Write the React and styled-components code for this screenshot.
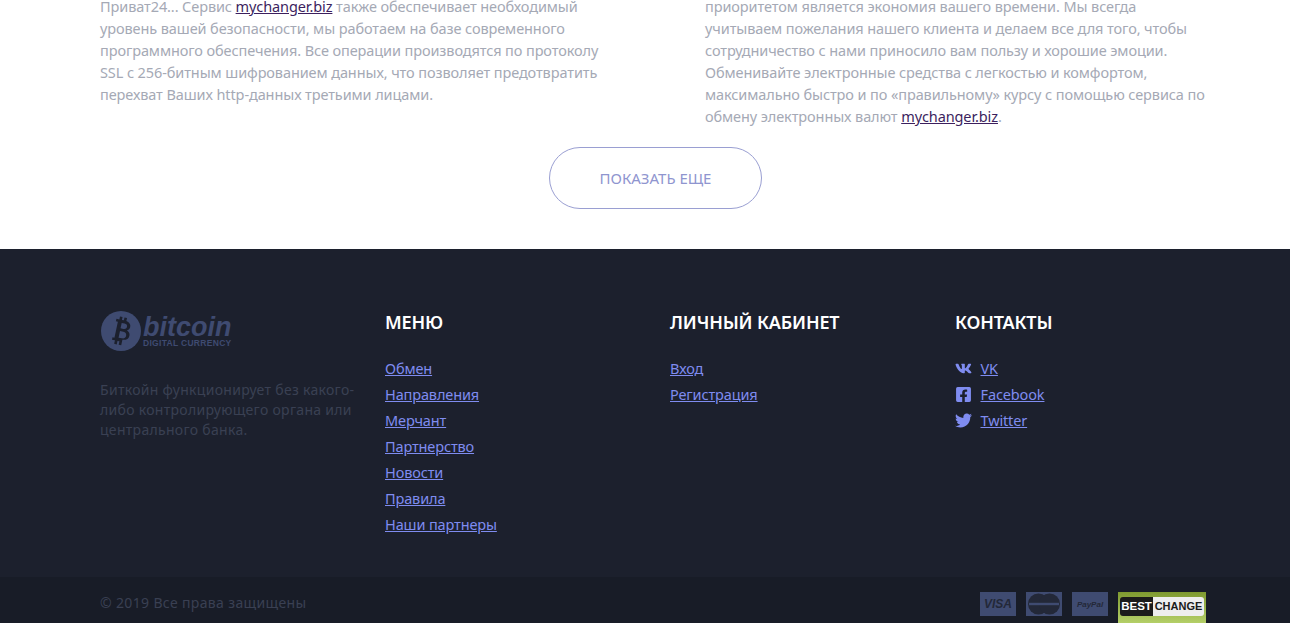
import React from 'react';
import styled, { createGlobalStyle } from 'styled-components';
import { FaVk, FaFacebookSquare, FaTwitter } from 'react-icons/fa';

const GlobalStyle = createGlobalStyle`
  html, body {
    margin: 0;
    padding: 0;
    background: #fff;
    overflow: hidden;
  }
  * { box-sizing: border-box; }
`;

const menuLinks = ['Обмен', 'Направления', 'Мерчант', 'Партнерство', 'Новости', 'Правила', 'Наши партнеры'];
const accountLinks = ['Вход', 'Регистрация'];
const socialLinks = [
  { name: 'VK', Icon: FaVk },
  { name: 'Facebook', Icon: FaFacebookSquare },
  { name: 'Twitter', Icon: FaTwitter },
];

const App = () => {
  return (
    <Page>
      <GlobalStyle />
      <Article>
        <TextColumns>
          <TextColumn>
            Приват24... Сервис <InlineLink>mychanger.biz</InlineLink> также обеспечивает необходимый<br />
            уровень вашей безопасности, мы работаем на базе современного<br />
            программного обеспечения. Все операции производятся по протоколу<br />
            SSL с 256-битным шифрованием данных, что позволяет предотвратить<br />
            перехват Ваших http-данных третьими лицами.
          </TextColumn>
          <TextColumn>
            приоритетом является экономия вашего времени. Мы всегда<br />
            учитываем пожелания нашего клиента и делаем все для того, чтобы<br />
            сотрудничество с нами приносило вам пользу и хорошие эмоции.<br />
            Обменивайте электронные средства с легкостью и комфортом,<br />
            максимально быстро и по «правильному» курсу с помощью сервиса по<br />
            обмену электронных валют <InlineLink>mychanger.biz</InlineLink>.
          </TextColumn>
        </TextColumns>
        <MoreButton>ПОКАЗАТЬ ЕЩЕ</MoreButton>
      </Article>
      <Footer>
        <FooterMain>
          <AboutColumn>
            <Logo>
              <LogoCoin>
                <svg width="40" height="40" viewBox="0 0 40 40">
                  <circle cx="20" cy="20" r="20" fill="#3f4b71" />
                  <g transform="rotate(12 20 20)">
                    <path
                      fillRule="evenodd"
                      fill="#1c202d"
                      d="M13 9h3V6h2.6v3h2V6h2.6v3.2c3 .6 5 2.2 5 5 0 1.900-1 3.300-2.600 4 2.300.6 3.600 2.200 3.600 4.600 0 3.500-2.500 5.200-6 5.500V34h-2.600v-3.600h-2V34H16v-3.600h-3V28h2V11.500h-2zm6 3v5.500h3c1.800 0 3-1 3-2.800S23.800 12 22 12zm0 8.200V27h3.500c2 0 3.500-1.200 3.500-3.400s-1.500-3.400-3.500-3.400z"
                    />
                  </g>
                </svg>
              </LogoCoin>
              <LogoText>
                <LogoName>bitcoin</LogoName>
                <LogoTagline>DIGITAL CURRENCY</LogoTagline>
              </LogoText>
            </Logo>
            <About>
              Биткойн функционирует без какого-<br />
              либо контролирующего органа или<br />
              центрального банка.
            </About>
          </AboutColumn>
          <LinkColumn>
            <ColumnTitle>МЕНЮ</ColumnTitle>
            <LinkList>
              {menuLinks.map((link) => (
                <li key={link}><FooterLink>{link}</FooterLink></li>
              ))}
            </LinkList>
          </LinkColumn>
          <LinkColumn>
            <ColumnTitle>ЛИЧНЫЙ КАБИНЕТ</ColumnTitle>
            <LinkList>
              {accountLinks.map((link) => (
                <li key={link}><FooterLink>{link}</FooterLink></li>
              ))}
            </LinkList>
          </LinkColumn>
          <LinkColumn>
            <ColumnTitle>КОНТАКТЫ</ColumnTitle>
            <LinkList>
              {socialLinks.map(({ name, Icon }) => (
                <SocialItem key={name}>
                  <SocialIcon><Icon size={17} /></SocialIcon>
                  <FooterLink>{name}</FooterLink>
                </SocialItem>
              ))}
            </LinkList>
          </LinkColumn>
        </FooterMain>
        <FooterBottom>
          <Copyright>© 2019 Все права защищены</Copyright>
          <Payments>
            <PayBadge>
              <VisaMark>VISA</VisaMark>
            </PayBadge>
            <PayBadge>
              <svg width="34" height="22" viewBox="0 0 34 22">
                <circle cx="11.500" cy="11" r="10.500" fill="#232838" />
                <circle cx="22.500" cy="11" r="10.500" fill="#232838" />
                <rect x="2" y="9.800" width="30" height="2.400" fill="#3f4b71" />
              </svg>
            </PayBadge>
            <PayBadge>
              <PaypalMark>PayPal</PaypalMark>
            </PayBadge>
            <BestChange>
              <BestPart>BEST</BestPart>
              <ChangePart>CHANGE</ChangePart>
            </BestChange>
          </Payments>
        </FooterBottom>
      </Footer>
    </Page>
  );
};

export default App;

const Page = styled.div`
  height: 623px;
  overflow: hidden;
  display: flex;
  flex-direction: column;
  justify-content: flex-end;
  font-family: 'Noto Sans', 'Open Sans', sans-serif;
`;

const Article = styled.section`
  display: flex;
  flex-direction: column;
  align-items: center;
  padding: 0 84px 40px 100px;
  flex-shrink: 0;
`;

const TextColumns = styled.div`
  display: grid;
  grid-template-columns: 605px 1fr;
  width: 100%;
`;

const TextColumn = styled.p`
  margin: 0;
  font-size: 14.5px;
  letter-spacing: -0.1px;
  line-height: 22px;
  color: #a5a9b5;
  white-space: nowrap;
`;

const InlineLink = styled.a`
  color: #3c1f5e;
  text-decoration: underline;
`;

const MoreButton = styled.button`
  width: 213px;
  height: 62px;
  margin: 20px 0 0 5px;
  border: 1px solid #9a9fd2;
  border-radius: 31px;
  background: #fff;
  color: #8f95cf;
  font-family: inherit;
  font-size: 15px;
`;

const Footer = styled.footer`
  background: #1c202d;
  flex-shrink: 0;
`;

const FooterMain = styled.div`
  display: grid;
  grid-template-columns: repeat(4, 285px);
  height: 328px;
  padding: 60px 0 0 100px;
`;

const AboutColumn = styled.div`
  display: flex;
  flex-direction: column;
`;

const Logo = styled.div`
  display: flex;
  align-items: center;
  gap: 2px;
  height: 44px;
  padding-left: 1px;
`;

const LogoCoin = styled.div`
  display: flex;
  width: 40px;
  height: 40px;
`;

const LogoText = styled.div`
  display: flex;
  flex-direction: column;
  align-items: flex-end;
`;

const LogoName = styled.span`
  font-family: 'Liberation Sans', sans-serif;
  font-style: italic;
  font-weight: 700;
  font-size: 27px;
  line-height: 24px;
  color: #3f4b71;
`;

const LogoTagline = styled.span`
  font-family: 'Liberation Sans', sans-serif;
  font-weight: 700;
  font-size: 8.500px;
  letter-spacing: 0.3px;
  line-height: 9px;
  color: #3f4b71;
`;

const About = styled.p`
  margin: 27px 0 0;
  font-size: 14px;
  letter-spacing: 0.3px;
  line-height: 20px;
  color: #3a4053;
  white-space: nowrap;
`;

const LinkColumn = styled.div`
  display: flex;
  flex-direction: column;
`;

const ColumnTitle = styled.h4`
  margin: 0;
  font-size: 18px;
  letter-spacing: -0.15px;
  line-height: 26px;
  font-weight: 600;
  color: #fff;
`;

const LinkList = styled.ul`
  list-style: none;
  margin: 20px 0 0;
  padding: 0;
  display: flex;
  flex-direction: column;
  font-size: 14.5px;
  letter-spacing: -0.13px;
  line-height: 26px;
`;

const SocialItem = styled.li`
  display: flex;
  align-items: center;
`;

const SocialIcon = styled.span`
  display: flex;
  width: 25.500px;
  color: #7f8cf0;
`;

const FooterLink = styled.a`
  color: #7f8cf0;
  text-decoration: underline;
`;

const FooterBottom = styled.div`
  display: flex;
  justify-content: space-between;
  align-items: flex-start;
  height: 46px;
  padding: 15px 84px 0 100px;
  background: #181c27;
`;

const Copyright = styled.span`
  font-size: 14px;
  letter-spacing: 0.35px;
  line-height: 22px;
  color: #3a4053;
`;

const Payments = styled.div`
  display: flex;
  align-items: flex-start;
  gap: 10px;
`;

const PayBadge = styled.div`
  display: flex;
  align-items: center;
  justify-content: center;
  width: 36px;
  height: 24px;
  background: #3f4b71;
`;

const VisaMark = styled.span`
  font-family: 'Liberation Sans', sans-serif;
  font-style: italic;
  font-weight: 700;
  font-size: 12px;
  color: #232838;
`;

const PaypalMark = styled.span`
  font-family: 'Liberation Sans', sans-serif;
  font-style: italic;
  font-weight: 700;
  font-size: 8px;
  color: #232838;
`;

const BestChange = styled.div`
  display: flex;
  align-items: flex-start;
  justify-content: center;
  width: 88px;
  height: 31px;
  padding-top: 5px;
  background: linear-gradient(#7f9a30, #b4cf68);
  font-family: 'Liberation Sans', sans-serif;
  font-weight: 700;
`;

const BestPart = styled.span`
  width: 33px;
  height: 19px;
  font-size: 11.500px;
  line-height: 19px;
  text-align: center;
  background: #1b1b1b;
  color: #fff;
  border-radius: 3px 0 0 3px;
`;

const ChangePart = styled.span`
  width: 51px;
  height: 19px;
  font-size: 11px;
  line-height: 19px;
  text-align: center;
  background: #eee;
  color: #1b1b1b;
  border-radius: 0 3px 3px 0;
`;
